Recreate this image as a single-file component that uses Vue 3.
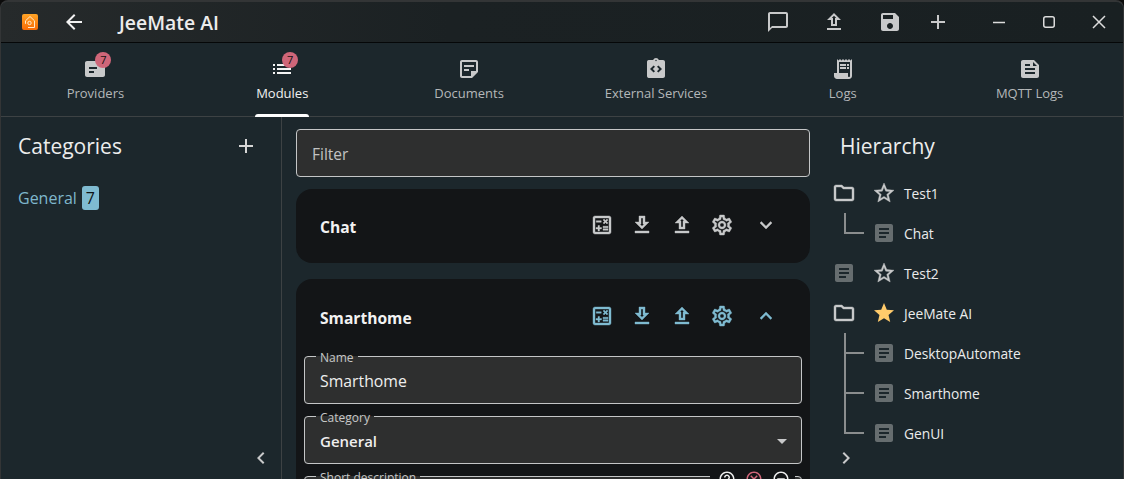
<script setup>
const icons = {
  back: 'M20 11H7.83l5.59-5.59L12 4l-8 8 8 8 1.41-1.41L7.83 13H20v-2z',
  chat: 'M20 2H4c-1.1 0-2 .9-2 2v18l4-4h14c1.1 0 2-.9 2-2V4c0-1.1-.9-2-2-2zm0 14H6l-2 2V4h16v12z',
  upload: 'M5 20h14v-2H5v2zm0-10h4v6h6v-6h4l-7-7-7 7zm8-2v6h-2V8H9.83L12 5.83 14.17 8H13z',
  download: 'M19 9h-4V3H9v6H5l7 7 7-7zm-8 2V5h2v6h1.17L12 13.17 9.83 11H11zm-6 7h14v2H5z',
  save: 'M17 3H5c-1.11 0-2 .9-2 2v14c0 1.1.89 2 2 2h14c1.1 0 2-.9 2-2V7l-4-4zm-5 16c-1.66 0-3-1.34-3-3s1.34-3 3-3 3 1.34 3 3-1.34 3-3 3zm3-10H5V5h10v4z',
  add: 'M19 13h-6v6h-2v-6H5v-2h6V5h2v6h6v2z',
  providers: 'M20 4H4c-1.1 0-2 .9-2 2v12c0 1.1.9 2 2 2h16c1.1 0 2-.9 2-2V6c0-1.1-.9-2-2-2zM6 10h8v2H6v-2zm0 4h5v2H6v-2z',
  list: 'M3 13h2v-2H3v2zm0 4h2v-2H3v2zm0-8h2V7H3v2zm4 4h14v-2H7v2zm0 4h14v-2H7v2zM7 7v2h14V7H7z',
  note: 'M19 5v9h-5v5H5V5h14m0-2H5c-1.1 0-2 .9-2 2v14c0 1.1.9 2 2 2h10l6-6V5c0-1.1-.9-2-2-2zm-7 11H7v-2h5v2zm5-4H7V8h10v2z',
  integration: 'M19 3h-4.18C14.4 1.84 13.3 1 12 1s-2.4.84-2.82 2H5c-.14 0-.27.01-.4.04-.39.08-.74.28-1.01.55-.18.18-.33.4-.43.64-.1.23-.16.49-.16.77v14c0 .27.06.54.16.78s.25.45.43.64c.27.27.62.47 1.01.55.13.02.26.03.4.03h14c1.1 0 2-.9 2-2V5c0-1.1-.9-2-2-2zm-8 11.17l-1.41 1.42L6 12l3.59-3.59L11 9.83 8.83 12 11 14.17zm1-9.92c-.41 0-.75-.34-.75-.75s.34-.75.75-.75.75.34.75.75-.34.75-.75.75zm2.41 11.34L13 14.17 15.17 12 13 9.83l1.41-1.42L18 12l-3.59 3.59z',
  receipt: 'M19.5 3.5L18 2l-1.5 1.5L15 2l-1.5 1.5L12 2l-1.5 1.5L9 2 7.5 3.5 6 2v14H3v3c0 1.66 1.34 3 3 3h12c1.66 0 3-1.34 3-3V2l-1.5 1.5zM19 19c0 .55-.45 1-1 1s-1-.45-1-1v-3H8V5h11v14zM9 7h6v2H9zm7 0h2v2h-2zM9 10h6v2H9zm7 0h2v2h-2z',
  feed: 'M16 3H5C3.9 3 3.01 3.9 3.01 5L3 19c0 1.1.89 2 1.99 2H19c1.1 0 2-.9 2-2V8l-5-5zM7 7h5v2H7V7zm10 10H7v-2h10v2zm0-4H7v-2h10v2zm-2-4V5l4 4h-4z',
  calc: 'M19 3H5c-1.1 0-2 .9-2 2v14c0 1.1.9 2 2 2h14c1.1 0 2-.9 2-2V5c0-1.1-.9-2-2-2zm0 16H5V5h14v14zM6.25 7.72h5v1.5h-5zM13 15.75h5v1.5h-5zM13 13.25h5v1.5h-5zM8 18h1.5v-2h2v-1.5h-2v-2H8v2H6V16h2zM14.09 10.95l1.41-1.41 1.41 1.41 1.06-1.06-1.41-1.42 1.41-1.41L16.91 6 15.5 7.41 14.09 6l-1.06 1.06 1.41 1.41-1.41 1.42z',
  gear: 'M19.43 12.98c.04-.32.07-.64.07-.98 0-.34-.03-.66-.07-.98l2.11-1.65c.19-.15.24-.42.12-.64l-2-3.46c-.09-.16-.26-.25-.44-.25-.06 0-.12.01-.17.03l-2.49 1c-.52-.4-1.08-.73-1.69-.98l-.38-2.65C14.46 2.18 14.25 2 14 2h-4c-.25 0-.46.18-.49.42l-.38 2.65c-.61.25-1.17.59-1.69.98l-2.49-1c-.06-.02-.12-.03-.18-.03-.17 0-.34.09-.43.25l-2 3.46c-.13.22-.07.49.12.64l2.11 1.65c-.04.32-.07.65-.07.98 0 .33.03.66.07.98l-2.11 1.65c-.19.15-.24.42-.12.64l2 3.46c.09.16.26.25.44.25.06 0 .12-.01.17-.03l2.49-1c.52.4 1.08.73 1.69.98l.38 2.65c.03.24.24.42.49.42h4c.25 0 .46-.18.49-.42l.38-2.65c.61-.25 1.17-.59 1.69-.98l2.49 1c.06.02.12.03.18.03.17 0 .34-.09.43-.25l2-3.46c.12-.22.07-.49-.12-.64l-2.11-1.65zm-1.98-1.71c.04.31.05.52.05.73 0 .21-.02.43-.05.73l-.14 1.13.89.7 1.08.84-.7 1.21-1.27-.51-1.04-.42-.9.68c-.43.32-.84.56-1.25.73l-1.06.43-.16 1.13-.2 1.35h-1.4l-.19-1.35-.16-1.13-1.06-.43c-.43-.18-.83-.41-1.23-.71l-.91-.7-1.06.43-1.27.51-.7-1.21 1.08-.84.89-.7-.14-1.13c-.03-.31-.05-.54-.05-.74s.02-.43.05-.73l.14-1.13-.89-.7-1.08-.84.7-1.21 1.27.51 1.04.42.9-.68c.43-.32.84-.56 1.25-.73l1.06-.43.16-1.13.2-1.35h1.39l.19 1.35.16 1.13 1.06.43c.43.18.83.41 1.23.71l.91.7 1.06-.43 1.27-.51.7 1.21-1.07.85-.89.7.14 1.13zM12 8c-2.21 0-4 1.79-4 4s1.79 4 4 4 4-1.79 4-4-1.79-4-4-4zm0 6c-1.1 0-2-.9-2-2s.9-2 2-2 2 .9 2 2-.9 2-2 2z',
  more: 'M16.59 8.59L12 13.17 7.41 8.59 6 10l6 6 6-6z',
  less: 'M12 8l-6 6 1.41 1.41L12 10.83l4.59 4.58L18 14z',
  left: 'M15.41 7.41L14 6l-6 6 6 6 1.41-1.41L10.83 12z',
  right: 'M10 6L8.59 7.41 13.17 12l-4.58 4.59L10 18l6-6z',
  folder: 'M9.17 6l2 2H20v10H4V6h5.17M10 4H4c-1.1 0-1.99.9-1.99 2L2 18c0 1.1.9 2 2 2h16c1.1 0 2-.9 2-2V8c0-1.1-.9-2-2-2h-8l-2-2z',
  starO: 'M22 9.24l-7.19-.62L12 2 9.19 8.63 2 9.24l5.46 4.73L5.82 21 12 17.27 18.18 21l-1.63-7.03L22 9.24zM12 15.4l-3.76 2.27 1-4.28-3.32-2.88 4.38-.38L12 6.1l1.71 4.04 4.38.38-3.32 2.88 1 4.28L12 15.4z',
  star: 'M12 17.27L18.18 21l-1.64-7.03L22 9.24l-7.19-.61L12 2 9.19 8.63 2 9.24l5.46 4.73L5.82 21z',
  article: 'M19 3H5c-1.1 0-2 .9-2 2v14c0 1.1.9 2 2 2h14c1.1 0 2-.9 2-2V5c0-1.1-.9-2-2-2zm-5 14H7v-2h7v2zm3-4H7v-2h10v2zm0-4H7V7h10v2z',
  drop: 'M7 10l5 5 5-5z',
  help: 'M11 18h2v-2h-2v2zm1-16C6.48 2 2 6.48 2 12s4.48 10 10 10 10-4.48 10-10S17.52 2 12 2zm0 18c-4.41 0-8-3.59-8-8s3.59-8 8-8 8 3.59 8 8-3.59 8-8 8zm0-14c-2.21 0-4 1.79-4 4h2c0-1.1.9-2 2-2s2 .9 2 2c0 2-3 1.75-3 5h2c0-2.25 3-2.5 3-5 0-2.21-1.79-4-4-4z',
  cancel: 'M12 2C6.47 2 2 6.47 2 12s4.47 10 10 10 10-4.47 10-10S17.53 2 12 2zm0 18c-4.41 0-8-3.59-8-8s3.59-8 8-8 8 3.59 8 8-3.59 8-8 8zm3.59-13L12 10.59 8.41 7 7 8.41 10.59 12 7 15.59 8.41 17 12 13.41 15.59 17 17 15.59 13.41 12 17 8.41z',
  remove: 'M7 11v2h10v-2H7zm5-9C6.48 2 2 6.48 2 12s4.48 10 10 10 10-4.48 10-10S17.52 2 12 2zm0 18c-4.41 0-8-3.59-8-8s3.59-8 8-8 8 3.59 8 8-3.59 8-8 8z'
}

const tabs = [
  { label: 'Providers', icon: 'providers', badge: 7 },
  { label: 'Modules', icon: 'list', badge: 7, active: true },
  { label: 'Documents', icon: 'note' },
  { label: 'External Services', icon: 'integration' },
  { label: 'Logs', icon: 'receipt' },
  { label: 'MQTT Logs', icon: 'feed' }
]

const cardActions = ['calc', 'download', 'upload', 'gear']

const tree = [
  { label: 'Test1', lead: 'folder', star: 'starO' },
  { label: 'Chat', conn: 'end' },
  { label: 'Test2', lead: 'article', star: 'starO' },
  { label: 'JeeMate AI', lead: 'folder', star: 'star' },
  { label: 'DesktopAutomate', conn: 'mid' },
  { label: 'Smarthome', conn: 'mid' },
  { label: 'GenUI', conn: 'end' }
]
</script>

<template>
  <div class="window">
    <header class="titlebar">
      <svg class="logo" viewBox="0 0 16 16">
        <defs>
          <linearGradient id="logoFill" x1="0" y1="0" x2="0" y2="1">
            <stop offset="0" stop-color="#ffa426" />
            <stop offset="1" stop-color="#f76a05" />
          </linearGradient>
        </defs>
        <rect width="16" height="16" rx="2" fill="url(#logoFill)" />
        <path d="M6 13.5h6.5V6.8L8 2.5 3.5 6.8v3" fill="none" stroke="#ffe9cc" stroke-width="1" />
        <circle cx="7.5" cy="9" r="1.7" fill="none" stroke="#ffe9cc" stroke-width="1" />
      </svg>
      <svg class="ic back" viewBox="0 0 24 24"><path :d="icons.back" /></svg>
      <span class="app-title">JeeMate AI</span>
      <div class="title-actions">
        <svg class="ic" viewBox="0 0 24 24"><path :d="icons.chat" /></svg>
        <svg class="ic" viewBox="0 0 24 24"><path :d="icons.upload" /></svg>
        <svg class="ic" viewBox="0 0 24 24"><path :d="icons.save" /></svg>
        <svg class="ic" viewBox="0 0 24 24"><path :d="icons.add" /></svg>
      </div>
      <div class="win-controls">
        <span class="win-btn"><svg width="12" height="12" viewBox="0 0 12 12"><path d="M0 6.5h12" /></svg></span>
        <span class="win-btn"><svg width="12" height="12" viewBox="0 0 12 12"><rect x=".75" y=".75" width="10.5" height="10.5" rx="2" /></svg></span>
        <span class="win-btn"><svg width="14" height="14" viewBox="0 0 14 14"><path d="M1 1l12 12M13 1 1 13" /></svg></span>
      </div>
    </header>

    <nav class="tabs">
      <div v-for="t in tabs" :key="t.label" class="tab" :class="{ active: t.active }">
        <span class="tab-icon">
          <svg class="ic" viewBox="0 0 24 24"><path :d="icons[t.icon]" fill-rule="evenodd" /></svg>
          <span v-if="t.badge" class="badge">{{ t.badge }}</span>
        </span>
        <span class="tab-label">{{ t.label }}</span>
      </div>
    </nav>

    <main class="body">
      <aside class="categories">
        <div class="panel-head">
          <h2>Categories</h2>
          <svg class="ic add" viewBox="0 0 24 24"><path :d="icons.add" /></svg>
        </div>
        <div class="cat-item">
          <span>General</span>
          <span class="cat-count">7</span>
        </div>
        <div class="collapse end">
          <svg class="ic" viewBox="0 0 24 24"><path :d="icons.left" /></svg>
        </div>
      </aside>

      <section class="center">
        <div class="filter">Filter</div>

        <article class="card">
          <div class="card-head">
            <strong>Chat</strong>
            <div class="card-actions">
              <svg v-for="a in cardActions" :key="a" class="ic" viewBox="0 0 24 24"><path :d="icons[a]" /></svg>
              <svg class="ic chev" viewBox="0 0 24 24"><path :d="icons.more" /></svg>
            </div>
          </div>
        </article>

        <article class="card">
          <div class="card-head open">
            <strong>Smarthome</strong>
            <div class="card-actions accent">
              <svg v-for="a in cardActions" :key="a" class="ic" viewBox="0 0 24 24"><path :d="icons[a]" /></svg>
              <svg class="ic chev" viewBox="0 0 24 24"><path :d="icons.less" /></svg>
            </div>
          </div>
          <div class="fields">
            <fieldset class="field">
              <legend>Name</legend>
              <div class="value">Smarthome</div>
            </fieldset>
            <fieldset class="field">
              <legend>Category</legend>
              <div class="value bold">
                <span>General</span>
                <svg class="ic drop" viewBox="0 0 24 24"><path :d="icons.drop" /></svg>
              </div>
            </fieldset>
            <fieldset class="field tall">
              <legend>Short description</legend>
              <div class="field-tools">
                <svg class="ic" viewBox="0 0 24 24"><path :d="icons.help" /></svg>
                <svg class="ic danger" viewBox="0 0 24 24"><path :d="icons.cancel" /></svg>
                <svg class="ic" viewBox="0 0 24 24"><path :d="icons.remove" /></svg>
              </div>
            </fieldset>
          </div>
        </article>
      </section>

      <aside class="hierarchy">
        <h2>Hierarchy</h2>
        <div class="tree">
          <div v-for="n in tree" :key="n.label" class="row">
            <template v-if="n.conn">
              <span class="conn" :class="n.conn"></span>
              <svg class="ic article" viewBox="0 0 24 24"><path :d="icons.article" /></svg>
            </template>
            <template v-else>
              <svg class="ic lead" :class="n.lead === 'article' ? 'article' : 'thick'" viewBox="0 0 24 24"><path :d="icons[n.lead]" /></svg>
              <svg class="ic starred" :class="n.star === 'star' ? 'gold' : 'thick'" viewBox="0 0 24 24"><path :d="icons[n.star]" /></svg>
            </template>
            <span class="row-label">{{ n.label }}</span>
          </div>
        </div>
        <div class="collapse">
          <svg class="ic" viewBox="0 0 24 24"><path :d="icons.right" /></svg>
        </div>
      </aside>
    </main>
  </div>
</template>

<style>
html, body { margin: 0; background: #0b0b0b; overflow: hidden; }
</style>

<style scoped>
* { box-sizing: border-box; }

.window {
  width: 1124px;
  height: 479px;
  display: flex;
  flex-direction: column;
  overflow: hidden;
  border: 1px solid #333536;
  border-top: 2px solid #333536;
  border-bottom: 0;
  border-radius: 8px 8px 0 0;
  background: #1c272c;
  color: #fff;
  font-family: "Open Sans", "Noto Sans", sans-serif;
}

.ic { width: 24px; height: 24px; fill: #c8c9ca; flex: none; display: block; }
.thick { stroke: #c8c9ca; stroke-width: .4; }

.titlebar {
  height: 41px;
  flex: none;
  display: flex;
  align-items: center;
  padding-left: 21px;
  background: linear-gradient(90deg, #262a2b 0, #1b2123 40%, #192022 100%);
  border-bottom: 1px solid #050708;
}
.logo { width: 16px; height: 16px; display: block; margin-right: 24px; }
.back { fill: #f2f2f2; margin-right: 32px; }
.app-title { font-size: 19.4px; font-weight: 600; color: #ececec; margin-left: 1px; }
.title-actions { margin-left: auto; display: flex; margin-right: 24px; }
.title-actions .ic { margin-left: 32px; }
.title-actions .ic:last-child { margin-left: 24px; }
.win-controls { display: flex; margin-right: -1px; }
.win-btn { width: 50px; height: 40px; display: flex; align-items: center; justify-content: center; }
.win-btn svg { fill: none; stroke: #dcdcdc; stroke-width: 1.5; }

.tabs {
  height: 74px;
  flex: none;
  display: grid;
  grid-template-columns: repeat(6, 1fr);
  padding-left: 1px;
  border-bottom: 1px solid #3d4244;
}
.tab {
  position: relative;
  display: flex;
  flex-direction: column;
  align-items: center;
  padding-top: 14px;
  color: #b4b7b9;
}
.tab-icon { position: relative; display: block; }
.tab-label { font-size: 13px; line-height: 18px; margin-top: 3px; }
.badge {
  position: absolute;
  left: 12px;
  top: -5px;
  width: 16px;
  height: 16px;
  border-radius: 50%;
  background: #cf6679;
  color: #111;
  font-size: 11px;
  line-height: 16px;
  text-align: center;
}
.tab.active { color: #f0f1f1; }
.tab.active .ic { fill: #f4f4f4; }
.tab.active .tab-label::after {
  content: "";
  position: absolute;
  left: 50%;
  bottom: -1px;
  width: 54px;
  height: 3px;
  margin-left: -27px;
  border-radius: 3px 3px 0 0;
  background: #fff;
}

.body { flex: 1; min-height: 0; display: flex; }

.categories {
  width: 281px;
  flex: none;
  display: flex;
  flex-direction: column;
  padding: 0 8px 9px 17px;
  border-right: 1px solid #3d4244;
}
.panel-head { display: flex; align-items: center; justify-content: space-between; height: 58px; padding-right: 15px; }
h2 { margin: 0; font-size: 21px; font-weight: 400; color: #eceded; }
.add { fill: #d6d6d6; }
.cat-item { display: flex; align-items: center; gap: 5px; height: 24px; margin-top: 11px; font-size: 16px; color: #7fb7cc; }
.cat-count {
  width: 17px;
  height: 24px;
  border-radius: 3px;
  background: #7fbbd1;
  color: #0f1416;
  font-size: 16px;
  line-height: 24px;
  text-align: center;
}
.collapse { margin-top: auto; }
.collapse.end { display: flex; justify-content: flex-end; }

.center {
  width: 542px;
  flex: none;
  overflow: hidden;
  padding: 12px 14px 0;
  display: flex;
  flex-direction: column;
  gap: 12px;
}
.filter {
  height: 48px;
  flex: none;
  display: flex;
  align-items: center;
  padding: 1px 0 0 15px;
  border: 1px solid #c4c6c7;
  border-radius: 4px;
  background: #2e2f2f;
  color: #c2c3c3;
  font-size: 15.5px;
}

.card { flex: none; border-radius: 16px; background: #131517; margin-bottom: 4px; }
.card-head {
  height: 74px;
  display: flex;
  align-items: center;
  justify-content: space-between;
  padding: 0 32px 0 24px;
}
.card-head.open { height: 76px; }
.card-head strong { font-size: 15.6px; font-weight: 700; color: #f2f2f2; padding-top: 1px; }
.card-actions { display: flex; gap: 16px; margin-top: -2px; }
.card-actions .chev { margin-left: 4px; }
.card-actions .ic { stroke: #c8c9ca; stroke-width: .4; }
.card-actions.accent .ic { fill: #7fbbd1; stroke: #7fbbd1; }

.fields { display: flex; flex-direction: column; gap: 4px; padding: 0 8px; margin-top: -7px; }
.field {
  position: relative;
  margin: 0;
  padding: 0 15px;
  min-width: 0;
  border: 1px solid #c4c6c7;
  border-radius: 4px;
  background: #2e2f2f;
}
.field legend { padding: 3px 4px 0; margin-left: -4px; font-size: 12px; line-height: 13px; color: #c6c7c7; }
.value {
  height: 34px;
  margin-bottom: 5px;
  display: flex;
  align-items: center;
  justify-content: space-between;
  font-size: 15.8px;
  color: #eeeeee;
}
.value.bold { font-weight: 600; font-size: 15px; }
.drop { margin-right: -8px; }
.field.tall { height: 80px; }
.field-tools {
  position: absolute;
  top: -14px;
  right: 6px;
  display: flex;
  gap: 9px;
  padding: 0 5px 0 8px;
  background: #131517;
}
.field-tools .ic { width: 18px; height: 18px; fill: #ededed; }
.field-tools .danger { fill: #cf6679; }

.hierarchy {
  flex: 1;
  min-width: 0;
  display: flex;
  flex-direction: column;
  padding-bottom: 9px;
}
.hierarchy h2 { height: 56px; line-height: 58px; padding-left: 16px; }
.tree { margin-bottom: -7px; }
.row { display: flex; align-items: center; height: 40px; position: relative; }
.lead { margin-left: 8px; }
.starred { margin-left: 16px; }
.gold { fill: #ffcb6b; }
.article { fill: #666d6f; }
.row-label { margin-left: 8px; font-size: 13.8px; color: #eaebeb; }
.conn {
  align-self: flex-start;
  width: 20px;
  height: 21px;
  margin-left: 20px;
  margin-right: 8px;
  border-left: 2px solid #8a8d8e;
  border-bottom: 2px solid #8a8d8e;
  position: relative;
}
.conn.mid::after {
  content: "";
  position: absolute;
  left: -2px;
  top: 0;
  height: 40px;
  border-left: 2px solid #8a8d8e;
}
.hierarchy .collapse { padding-left: 10px; }
</style>
